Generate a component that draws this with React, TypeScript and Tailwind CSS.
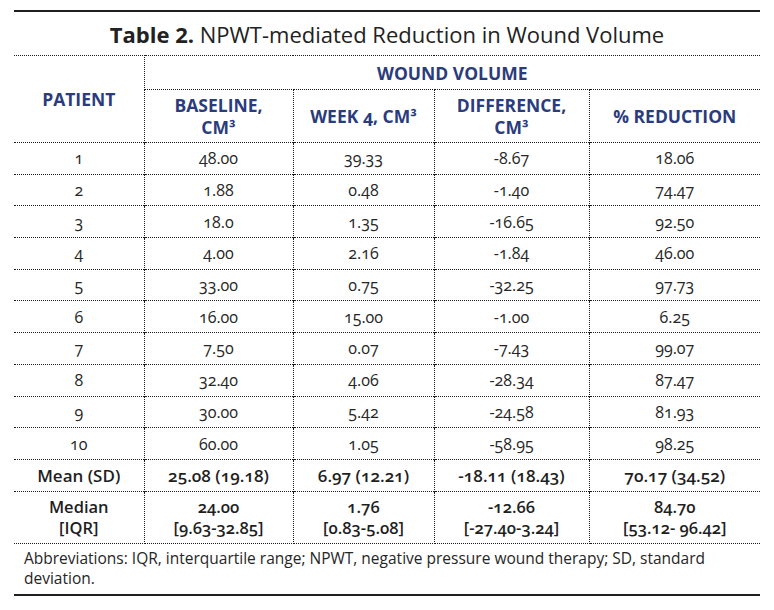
import React from "react";

const rows = [
  ["1", "48.00", "39.33", "-8.67", "18.06"],
  ["2", "1.88", "0.48", "-1.40", "74.47"],
  ["3", "18.0", "1.35", "-16.65", "92.50"],
  ["4", "4.00", "2.16", "-1.84", "46.00"],
  ["5", "33.00", "0.75", "-32.25", "97.73"],
  ["6", "16.00", "15.00", "-1.00", "6.25"],
  ["7", "7.50", "0.07", "-7.43", "99.07"],
  ["8", "32.40", "4.06", "-28.34", "87.47"],
  ["9", "30.00", "5.42", "-24.58", "81.93"],
  ["10", "60.00", "1.05", "-58.95", "98.25"],
];

const bd = "border-[#1a1a1a] border-dotted";

export default function App() {
  return (
    <div className="w-[774px] h-[610px] bg-white pt-[10px] text-[#262626]" style={{ fontFamily: '"Open Sans", "Noto Sans", sans-serif' }}>
      <div className="mx-[14px] w-[746px] border-t-2 border-[#1f1f1f]">
        <div className="h-[43px] flex items-center justify-center text-[22px] leading-none text-[#222]">
          <span className="font-bold">Table 2.</span>
          <span>&nbsp;NPWT-mediated Reduction in Wound Volume</span>
        </div>
        <table className="w-full border-collapse table-fixed oldstyle-nums text-[16px]">
          <colgroup>
            <col className="w-[130px]" />
            <col className="w-[149px]" />
            <col className="w-[141px]" />
            <col className="w-[155px]" />
            <col className="w-[171px]" />
          </colgroup>
          <thead className="text-[#2b3c7d] font-bold text-[17.5px] leading-[22px]">
            <tr className="h-[34px]">
              <th rowSpan={2} className={`border-t border-r ${bd} font-bold`}>PATIENT</th>
              <th colSpan={4} className={`border-t ${bd} font-bold`}>WOUND VOLUME</th>
            </tr>
            <tr className="h-[53px]">
              <th className={`border-t border-r ${bd} font-bold`}>BASELINE,<br />CM³</th>
              <th className={`border-t border-r ${bd} font-bold`}>WEEK 4, CM³</th>
              <th className={`border-t border-r ${bd} font-bold`}>DIFFERENCE,<br />CM³</th>
              <th className={`border-t ${bd} font-bold`}>% REDUCTION</th>
            </tr>
          </thead>
          <tbody>
            {rows.map((r, i) => (
              <tr key={i} className="h-[31.7px]">
                {r.map((c, j) => (
                  <td key={j} className={`border-t ${j < 4 ? "border-r" : ""} ${bd} text-center p-0`}>{c}</td>
                ))}
              </tr>
            ))}
            <tr className="h-[32px] font-semibold text-[17px] text-[#1f1f1f]">
              <td className={`border-t border-r ${bd} text-center`}>Mean (SD)</td>
              <td className={`border-t border-r ${bd} text-center`}>25.08 (19.18)</td>
              <td className={`border-t border-r ${bd} text-center`}>6.97 (12.21)</td>
              <td className={`border-t border-r ${bd} text-center`}>-18.11 (18.43)</td>
              <td className={`border-t ${bd} text-center`}>70.17 (34.52)</td>
            </tr>
            <tr className="h-[52px] font-semibold text-[16.5px] leading-[21px] text-[#1f1f1f]">
              <td className={`border-t border-b border-r ${bd} text-center p-0`}>Median<br />[IQR]</td>
              <td className={`border-t border-b border-r ${bd} text-center p-0`}>24.00<br />[9.63-32.85]</td>
              <td className={`border-t border-b border-r ${bd} text-center p-0`}>1.76<br />[0.83-5.08]</td>
              <td className={`border-t border-b border-r ${bd} text-center p-0`}>-12.66<br />[-27.40-3.24]</td>
              <td className={`border-t border-b ${bd} text-center p-0`}>84.70<br />[53.12- 96.42]</td>
            </tr>
          </tbody>
        </table>
        <div className="px-[10px] pt-[4px] pb-[6px] text-[15.5px] leading-[20px] text-[#262626] border-b-2 border-[#1f1f1f]">
          Abbreviations: IQR, interquartile range; NPWT, negative pressure wound therapy; SD, standard deviation.
        </div>
      </div>
    </div>
  );
}
